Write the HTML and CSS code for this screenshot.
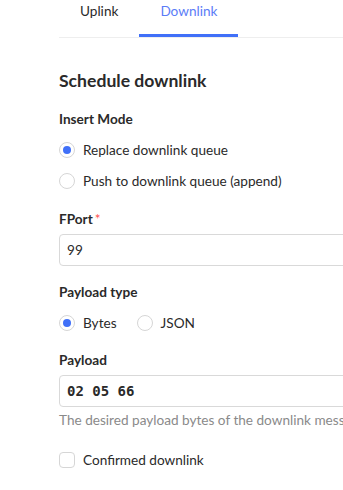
FILE: index.html
```html
<!DOCTYPE html>
<html lang="en">
<head>
  <meta charset="UTF-8" />
  <meta name="viewport" content="width=device-width, initial-scale=1.0"/>
  <title>Schedule downlink</title>
  <link rel="stylesheet" href="styles.css">
</head>
<body>
  <div class="page">
    <div class="tabs">
      <div class="tab">Uplink</div>
      <div class="tab active">Downlink</div>
    </div>

    <h2 class="title">Schedule downlink</h2>

    <div class="field">
      <div class="label">Insert Mode</div>
      <div class="radio-list">
        <label class="radio"><span class="dot checked"></span>Replace downlink queue</label>
        <label class="radio"><span class="dot"></span>Push to downlink queue (append)</label>
      </div>
    </div>

    <div class="field">
      <div class="label">FPort<span class="req">*</span></div>
      <div class="input">99</div>
    </div>

    <div class="field">
      <div class="label">Payload type</div>
      <div class="radio-row">
        <label class="radio"><span class="dot checked"></span>Bytes</label>
        <label class="radio"><span class="dot"></span>JSON</label>
      </div>
    </div>

    <div class="field">
      <div class="label">Payload</div>
      <div class="input mono">02 05 66</div>
      <div class="help">The desired payload bytes of the downlink message in HEX format.</div>
    </div>

    <label class="check"><span class="box"></span>Confirmed downlink</label>
  </div>
</body>
</html>
```

FILE: styles.css
```css
body {
  margin: 0;
  font-family: Lato, "Noto Sans", sans-serif;
  font-size: 13.6px;
  color: #2a2a2a;
  background: #fff;
  overflow: hidden;
}

.page {
  padding-left: 59px;
  width: 620px;
}

.tabs {
  display: flex;
  height: 37px;
  border-bottom: 1px solid #eeeeee;
}

.tab {
  box-sizing: border-box;
  height: 37px;
  padding: 2px 21px 0;
  line-height: 18px;
  border-bottom: 3px solid transparent;
}

.tab.active {
  color: #5b7cf7;
  border-bottom-color: #4070f8;
}

.title {
  margin: 30px 0 -1px;
  font-size: 17.6px;
  font-weight: 700;
  line-height: 26px;
}

.label {
  font-weight: 700;
  line-height: 20px;
  margin-top: 16px;
}

.req {
  color: #ff4d4f;
  font-weight: 400;
  margin-left: 2px;
}

.radio-list {
  display: flex;
  flex-direction: column;
  gap: 11px;
  margin-top: 11px;
  padding-bottom: 2px;
}

.radio-row {
  display: flex;
  gap: 20px;
  margin-top: 11px;
  padding-bottom: 1px;
}

.radio, .check {
  display: flex;
  align-items: center;
  gap: 8px;
  line-height: 20px;
}

.dot {
  box-sizing: border-box;
  width: 16px;
  height: 16px;
  border: 1px solid #d6d6d6;
  border-radius: 50%;
  display: flex;
  align-items: center;
  justify-content: center;
}

.dot.checked::after {
  content: "";
  width: 8px;
  height: 8px;
  border-radius: 50%;
  background: #4070f8;
}

.input {
  box-sizing: border-box;
  height: 32px;
  margin-top: 5px;
  padding: 0 7px;
  line-height: 30px;
  border: 1px solid #d9d9d9;
  border-radius: 4px;
}

.mono {
  font-family: "DejaVu Sans Mono", monospace;
  font-weight: 700;
  font-size: 14px;
}

.help {
  color: #8a8a8a;
  line-height: 22px;
  margin-top: 2px;
  white-space: nowrap;
}

.check {
  margin-top: 19px;
}

.box {
  box-sizing: border-box;
  width: 16px;
  height: 16px;
  border: 1px solid #d6d6d6;
  border-radius: 4px;
}
```
